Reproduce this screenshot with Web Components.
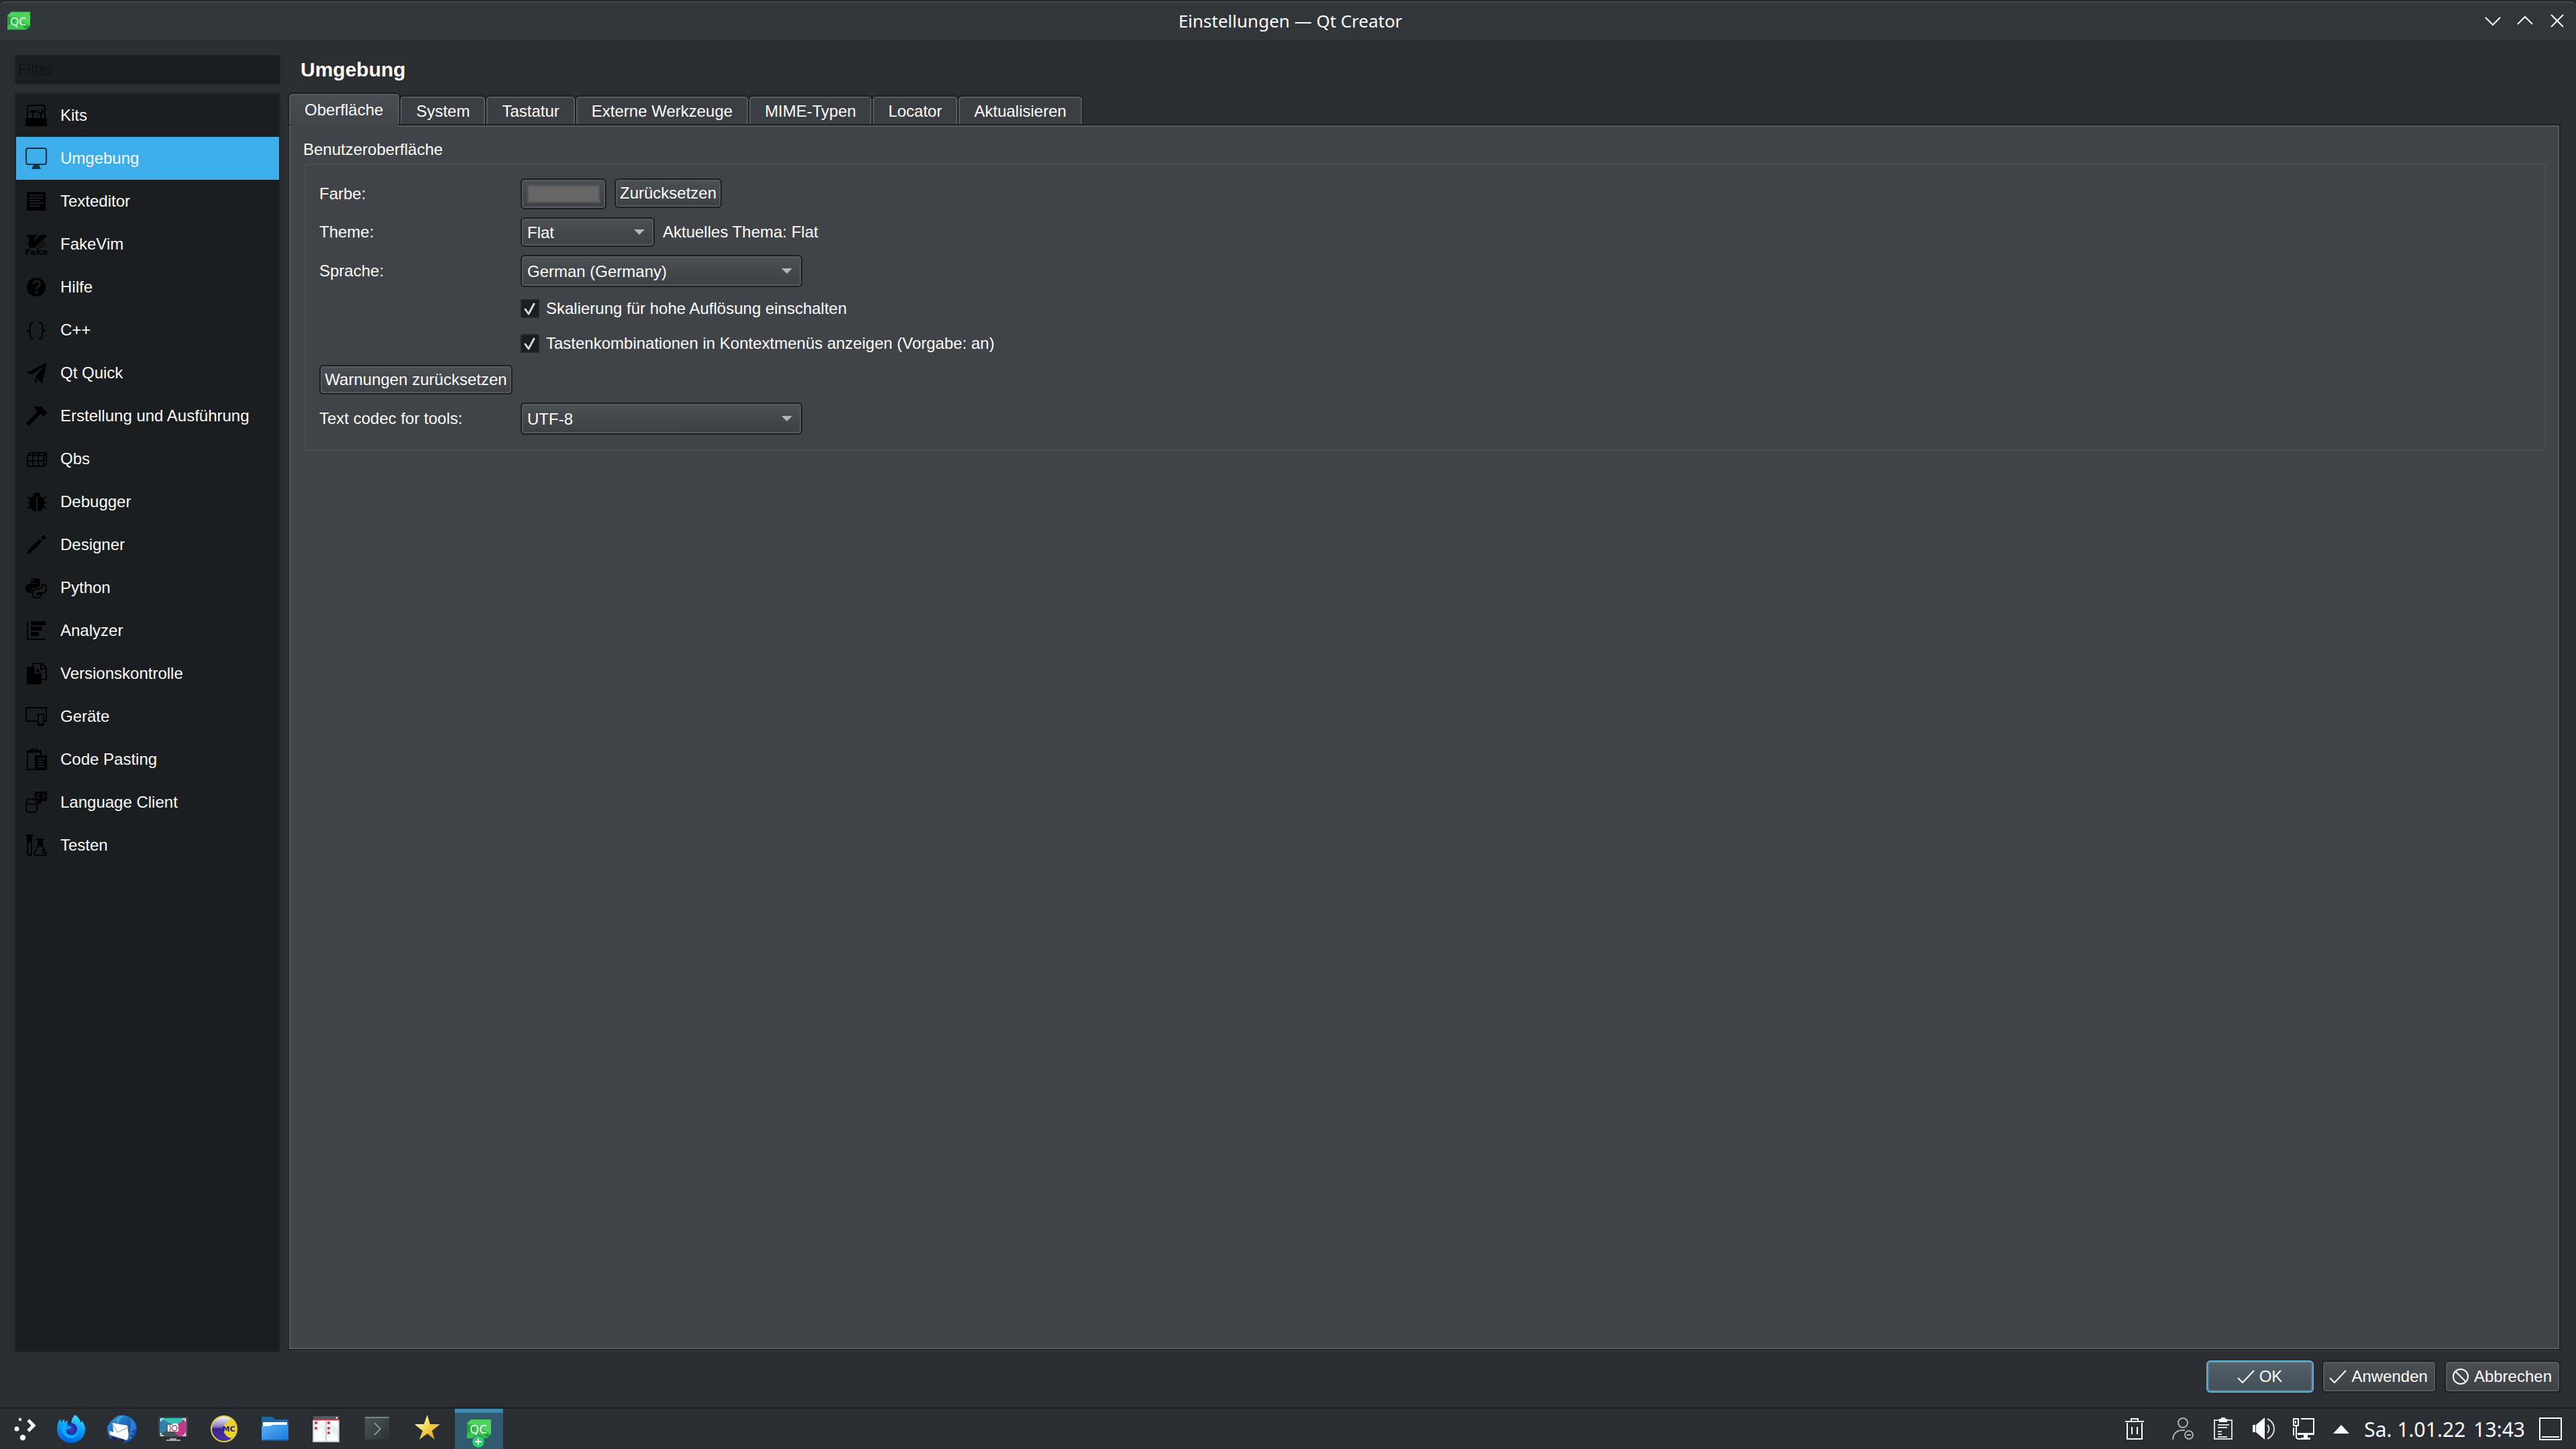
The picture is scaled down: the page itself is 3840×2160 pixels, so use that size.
<!DOCTYPE html>
<html lang="de">
<head>
<meta charset="utf-8">
<title>Einstellungen — Qt Creator</title>
<style>
  body {
    margin: 0;
    min-height: 100vh;
    display: flex;
    flex-direction: column;
    background: #2a2d31;
    color: #fcfcfc;
    font-family: "Liberation Sans", Arial, sans-serif;
    font-size: 24px;
    --dark: #1d2023;
    --light: #565a5f;
    --view: #1b1e20;
    --pane: #414448;
  }
  main {
    flex: 1;
    display: grid;
    grid-template-columns: 396px 1fr;
    grid-template-rows: 1fr auto;
    gap: 12px;
    padding: 22px 23px 24px 22px;
  }
  dialog-buttons {
    grid-column: 1 / -1;
  }
</style>
</head>
<body>
  <title-bar>Einstellungen — Qt Creator</title-bar>

  <main>
    <category-list>
      <category-item icon="kits">Kits</category-item>
      <category-item icon="screen" selected>Umgebung</category-item>
      <category-item icon="text">Texteditor</category-item>
      <category-item icon="vim">FakeVim</category-item>
      <category-item icon="help">Hilfe</category-item>
      <category-item icon="braces">C++</category-item>
      <category-item icon="plane">Qt Quick</category-item>
      <category-item icon="hammer">Erstellung und Ausführung</category-item>
      <category-item icon="qbs">Qbs</category-item>
      <category-item icon="bug">Debugger</category-item>
      <category-item icon="pencil">Designer</category-item>
      <category-item icon="python">Python</category-item>
      <category-item icon="bars">Analyzer</category-item>
      <category-item icon="versions">Versionskontrolle</category-item>
      <category-item icon="devices">Geräte</category-item>
      <category-item icon="paste">Code Pasting</category-item>
      <category-item icon="language">Language Client</category-item>
      <category-item icon="test">Testen</category-item>
    </category-list>

    <settings-page>
      <span slot="title">Umgebung</span>
      <page-tab selected>Oberfläche</page-tab>
      <page-tab>System</page-tab>
      <page-tab>Tastatur</page-tab>
      <page-tab>Externe Werkzeuge</page-tab>
      <page-tab>MIME-Typen</page-tab>
      <page-tab>Locator</page-tab>
      <page-tab>Aktualisieren</page-tab>
      <interface-form slot="content"></interface-form>
    </settings-page>

    <dialog-buttons>
      <push-button icon="check" default>OK</push-button>
      <push-button icon="check">Anwenden</push-button>
      <push-button icon="cancel">Abbrechen</push-button>
    </dialog-buttons>
  </main>

  <task-bar></task-bar>

<script>
// [viewBox size, markup]
const ICONS = {
  kits: [32, `<path d="M0 20h32v12H0z"/><path d="M3 20V5q0-4 4-4h18q4 0 4 4v15" fill="none" stroke="#000" stroke-width="2"/>
    <path d="M5 12l4-4h7v4h-4v8h-2v-8zM22 20v-6q-4-1-4-5 0-2 2-3v5h4V6q3 1 3 4 0 3-3 4v6z"/>`],
  screen: [32, `<g opacity=".7"><rect x="1" y="1" width="30" height="24" rx="3" fill="none" stroke="#000" stroke-width="2"/><path d="M12 26h8l3 6H9z"/></g>`],
  text: [32, `<path d="M2 2h28v28H2z"/><path d="M6 7h20M6 11h20M6 15h16M6 19h20M6 23h16" stroke="#1b1e20" stroke-width="2"/>`],
  vim: [32, `<path d="M16 0l16 16-8 6H8L0 15z" opacity=".3"/><path d="M2 2h13v3h-2v8l8-9V2h10v3L12 21H5V5H2z"/>
    <text x="-1" y="32" font-family="DejaVu Sans, sans-serif" font-size="13" font-weight="bold">Fake</text>`],
  help: [32, `<circle cx="16" cy="16" r="14"/><path d="M11.500 12q0-5 5-5t5 4.500q0 3-3 4.500-2 1-2 3.500" fill="none" stroke="#1b1e20" stroke-width="3"/><circle cx="16.500" cy="24" r="2" fill="#1b1e20"/>`],
  braces: [32, `<path d="M12 5h-1q-4 0-4 4v4q0 4-5 4 5 0 5 4v4q0 4 4 4h1M20 5h1q4 0 4 4v4q0 4 5 4-5 0-5 4v4q0 4-4 4h-1" fill="none" stroke="#000" stroke-width="2"/>`],
  plane: [32, `<path d="M32 0L1 16l9 2L25 8zM32 0L15 22l10 10zM14 23v9l4-4z"/>`],
  hammer: [32, `<path d="M12 2h12l8 9-5 6-4-4L5 31l-4-4L18 9z"/>`],
  qbs: [32, `<path d="M3 11h24v16H3zM3 19h24M11 11v16M19 11v16M3 11l4-4h24v16l-4 4M27 11l4-4M27 19l4-4" fill="none" stroke="#000" stroke-width="2"/><path d="M11 10l3-3M19 10l3-3" stroke="#000" stroke-width="3"/>`],
  bug: [32, `<path d="M11 7q2-5 6-5t6 5l-6 2zM16 9v21Q6 30 6 18q0-9 5-10zM18 9v21q10 0 10-12 0-9-5-10z"/>
    <path d="M7 12L3 8M6 17H2M7 23l-4 3M27 12l4-4M28 17h4M27 23l4 3" fill="none" stroke="#000" stroke-width="2"/>`],
  pencil: [32, `<path d="M2 30l2-6L21 7l4 4L8 28zM27 1l4 4-4 4-4-4z"/>`],
  python: [32, `<path d="M8 6q0-4 7-4t7 4v6q0 4-4 4h-5q-4 0-4 4v4H7q-7 0-7-7t7-7h8V9H8z"/><circle cx="11" cy="5" r="1" fill="#1b1e20"/>
    <path d="M25 11q6 0 6 7 0 6-6 6h-8v2h6v2q0 3-6 3t-6-3v-6q0-4 4-4h5q4 0 5-4z" fill="none" stroke="#000" stroke-width="2"/>`],
  bars: [32, `<path d="M2 2h2v26h26v2H2zM8 2h22v6H8zM8 10h16v6H8zM8 18h12v6H8z"/>`],
  versions: [32, `<path d="M2 6h12v10h10v16H2zM16 7l7 7h-7z"/><path d="M11 6V1h13l7 7v17h-7M23 1v8h8" fill="none" stroke="#000" stroke-width="2"/>`],
  devices: [32, `<path d="M18 23H1V3h30v20h-3" fill="none" stroke="#000" stroke-width="2"/><path d="M18 12h10v18H18zm2 2v12h6V14z" fill-rule="evenodd"/>`],
  paste: [32, `<path d="M2 2h6V0h10v2h6v8h-2V6H4v24h10v2H2zM14 10h18v22H14z"/><path d="M18 15h12M18 19h8M18 23h10M18 27h10M12 3h2" stroke="#1b1e20" stroke-width="2"/>`],
  language: [32, `<path d="M16 0h14q2 0 2 2v10q0 2-2 2h-5l-6 7v-7h-3q-2 0-2-2V2q0-2 2-2z"/><path d="M21 3l-4 4 4 4M25 3l4 4-4 4" fill="none" stroke="#1b1e20" stroke-width="2"/>
    <path d="M1 15q0-4 8-4t8 4-8 4-8-4v12q0 4 8 4t8-4V15" fill="none" stroke="#000" stroke-width="2"/>`],
  test: [32, `<path d="M0 0h12v2h-2v10H2V2H0zM16 6h12v2h-2v10h-8V8h-2z"/><path d="M3 12v16q0 3 3 3t3-3V12M19 17l-6 11q0 3 3 3h12q3 0 3-3l-6-11M24 23h4M24 27h6" fill="none" stroke="#000" stroke-width="2"/>`],

  check: [32, `<path d="M4 18l7 7L28 7" fill="none" stroke="#fcfcfc" stroke-width="2"/>`],
  cancel: [32, `<circle cx="16" cy="16" r="11" fill="none" stroke="#fcfcfc" stroke-width="2"/><path d="M8 8l16 16" stroke="#fcfcfc" stroke-width="2"/>`],
  min: [24, `<path d="M1 7l11 11L23 7" fill="none" stroke="#fcfcfc" stroke-width="2"/>`],
  max: [24, `<path d="M1 17L12 6l11 11" fill="none" stroke="#fcfcfc" stroke-width="2"/>`],
  close: [24, `<path d="M3 3l18 18M21 3L3 21" stroke="#fcfcfc" stroke-width="2"/>`],

  qtcreator: [36, `<defs><linearGradient id="g" x2="1" y2="1"><stop offset="0" stop-color="#2dc04a"/><stop offset="1" stop-color="#41cd52"/></linearGradient></defs>
    <path d="M6 4h30v22l-6 6H0V10z" fill="url(#g)"/><path d="M6 4h30v22L14 12 0 10z" fill="#5bdb6b" opacity=".6"/><path d="M0 10l12 8-12 8zM20 22l16 4-6 6z" fill="#17a02f" opacity=".8"/>
    <text x="17" y="25" text-anchor="middle" font-family="Liberation Sans Narrow, Noto Sans, sans-serif" font-size="18" fill="#fff">QC</text>`],
  launcher: [44, `<circle cx="14" cy="8" r="2.200" fill="#fcfcfc"/><circle cx="9" cy="22" r="3.500" fill="#fcfcfc"/><circle cx="18" cy="35" r="4.200" fill="#fcfcfc"/><path d="M26 9l8 8-8 8" fill="none" stroke="#fcfcfc" stroke-width="5"/>`],
  firefox: [44, `<defs><linearGradient id="a" x1=".7" x2=".4" y2="1"><stop offset="0" stop-color="#3fe1ff"/><stop offset=".5" stop-color="#0a9af5"/><stop offset="1" stop-color="#0560d8"/></linearGradient>
    <radialGradient id="b"><stop offset="0" stop-color="#4a37b8"/><stop offset="1" stop-color="#14309e"/></radialGradient></defs>
    <path d="M28 1q8 6 8 12l2-3q5 6 5 13a21 20 0 0 1-42 0Q1 13 6 7l1 5 5-5v5l5-3-1 5 6 1q0-9 6-14z" fill="url(#a)"/>
    <circle cx="22" cy="22" r="9" fill="url(#b)"/><path d="M7 18q7-4 13 0l3 1q-2 4-8 4-2 8 8 9 8 0 9-9 1 4 0 6-4 8-12 7Q9 34 7 18z" fill="#12b5ff" opacity=".8"/>`],
  thunderbird: [44, `<defs><linearGradient id="a" x2="1" y2="1"><stop offset="0" stop-color="#2fa7e0"/><stop offset=".5" stop-color="#1b62bf"/><stop offset="1" stop-color="#173a92"/></linearGradient></defs>
    <path d="M12 5Q19-1 30 3q13 5 14 18 0 14-14 21l-8 2q4-4 5-7L4 36Q-1 28 0 19l5-8z" fill="url(#a)"/>
    <path d="M34 6q9 7 9 16l-8 4 6 4-8 1 4 5-9 3q9-14 6-33z" fill="#3f93dc" opacity=".6"/>
    <path d="M8 13l10 2 12 2 1 9q2 6-2 13L4 31l-1-6 6 2z" fill="#fff"/><path d="M9 16l6 11 16-7" fill="none" stroke="#b7bac2" stroke-width="1.500"/><path d="M4 32l11 4-6 2z" fill="#2a1266"/><path d="M10 12q6-9 16-10-9 5-10 13z" fill="#36aadf"/><circle cx="13" cy="12" r="1.500" fill="#9b3a18"/>`],
  spectacle: [44, `<path d="M0 4h44v30H0z" fill="#3a4547"/><path d="M2 6h40v26H2z" fill="#36c1b2"/><path d="M2 6v24l22-13z" fill="#2f7fa8"/><path d="M42 5v28H28l-10-9z" fill="#bd3d89"/><path d="M2 30l16-9 12 12H2z" fill="#445456"/>
    <path d="M4 11V7h4M36 7h4v4M4 28v4h4M36 32h4v-4" fill="none" stroke="#fff" stroke-width="1.500"/><path d="M14 16h3v10h-3zM18 16h3l1-2h6l1 2h1v10H18z" fill="#fff"/><circle cx="24" cy="21" r="4" fill="#fff" stroke="#b0366e" stroke-width="1.500"/><path d="M17 36h10v2h6v2H12v-2h5z" fill="#a5a9ab"/>`],
  mc: [44, `<defs><linearGradient id="a" x2="0" y2="1"><stop offset="0" stop-color="#fff"/><stop offset=".4" stop-color="#8a7ec4"/><stop offset=".5" stop-color="#3a2393"/><stop offset="1" stop-color="#4b34a4"/></linearGradient></defs>
    <circle cx="22" cy="22" r="19" fill="url(#a)" stroke="#e3cf38" stroke-width="2"/><path d="M35 8a14 14 0 1 0 0 28q6-7 6-14t-6-14z" fill="#e9d230"/><text x="29" y="26" text-anchor="middle" font-family="DejaVu Sans, sans-serif" font-size="11" font-weight="bold" fill="#2f1d7d">MC</text>`],
  folder: [44, `<defs><linearGradient id="a" x2="1" y2="1"><stop offset="0" stop-color="#5cb0f5"/><stop offset="1" stop-color="#1677dc"/></linearGradient></defs>
    <path d="M2 4h16l4 4h20v12H2z" fill="#1d699f"/><path d="M4 12h36v10H4z" fill="#fff"/><path d="M2 18h12l4-2h24v24H2z" fill="url(#a)"/><path d="M2 38h40v2H2z" fill="#155b99"/>`],
  krusader: [44, `<path d="M3 3h38v38H3z" fill="#fff"/><path d="M3 3h38v5H3z" fill="#525b64"/><path d="M3 8h38v1.500H3z" fill="#d33a4a"/><path d="M3 9v32h38V9M22 10v31" fill="none" stroke="#c3c8cb" stroke-width="2"/>
    <path d="M10 14l11 6v6zM29 14l11 7v14l-11-9z" fill="#eceded"/><path d="M5 11h4v4H5zM5 19h4v4H5zM24 11h4v4h-4zM24 19h4v4h-4zM24 26h4v4h-4z" fill="#df4155"/><circle cx="38" cy="5.500" r="1.200" fill="#fff"/>`],
  konsole: [44, `<defs><linearGradient id="a" x2="1" y2="1"><stop offset="0" stop-color="#4a5658"/><stop offset="1" stop-color="#2c3235"/></linearGradient></defs><rect x="4" y="4" width="36" height="34" rx="1" fill="url(#a)"/><path d="M4 4h36v2H4z" fill="#7b8486"/><path d="M18 13l9 9-9 9" fill="none" stroke="#a8aeb0" stroke-width="1.500"/>`],
  star: [44, `<defs><linearGradient id="a" x2="1" y2="1"><stop offset=".2" stop-color="#fff6a4"/><stop offset=".5" stop-color="#f2d24a"/><stop offset="1" stop-color="#df9318"/></linearGradient></defs><path d="M21 1l4 14h15l-12 10 4 13-11-9-12 9 5-13L2 15h14z" fill="url(#a)"/>`],

  trash: [36, `<path d="M4 7h28M13 7V3h10v4M7 9v24h22V9M14 15v11M22 15v11" fill="none" stroke="#fcfcfc" stroke-width="2"/>`],
  user: [36, `<g fill="none" stroke="#aeb0b2" stroke-width="2"><circle cx="18" cy="9" r="7"/><path d="M3 34q1-14 15-14h3"/><circle cx="27" cy="27" r="6"/><path d="M24 27h6"/></g>`],
  clipboard: [36, `<path d="M5 5h26v28H5z" fill="none" stroke="#d9dadb" stroke-width="2"/><path d="M12 3h3V1h6v2h3v5H12z" fill="#fcfcfc"/><path d="M10 12h17M10 16h14M10 22h6M10 26h6M10 30h14" stroke="#d9dadb" stroke-width="2"/>`],
  volume: [36, `<path d="M2 12h4v11H2zM7 12L20 1v33L7 23z" fill="#fcfcfc"/><path d="M24 12q5 6 0 12M24 3q10 5 10 15t-10 15" fill="none" stroke="#d9dadb" stroke-width="2"/>`],
  network: [36, `<path d="M14 3h19v23H9" fill="none" stroke="#fcfcfc" stroke-width="2"/><path d="M9 24h24v3h-9v4h4v3H14v-3h4v-4H9z" fill="#fcfcfc"/><path d="M3 3h7v10H3zM3 16v12M7 13v16q0 4 4 4h4M6 6v4" fill="none" stroke="#fcfcfc" stroke-width="2"/>`],
  arrow: [28, `<path d="M2 21L14 8l12 13z" fill="#fcfcfc"/>`],
  desktop: [36, `<path d="M2 2h32v32H2z" fill="none" stroke="#fcfcfc" stroke-width="2"/><path d="M5 30h26" stroke="#fcfcfc" stroke-width="2"/>`]
};

class BreezeIcon extends HTMLElement {
  constructor() {
    super();
    this.attachShadow({ mode: 'open' });
  }

  connectedCallback() {
    const [box, markup] = ICONS[this.getAttribute('name')];
    const size = this.getAttribute('size') || box;
    this.shadowRoot.innerHTML = `
      <style>
        :host { display: block; flex: none; }
        svg { display: block; overflow: visible; }
      </style>
      <svg width="${size}" height="${size}" viewBox="0 0 ${box} ${box}" aria-hidden="true">${markup}</svg>
    `;
  }
}
customElements.define('breeze-icon', BreezeIcon);

class TitleBar extends HTMLElement {
  constructor() {
    super();
    this.attachShadow({ mode: 'open' });
    this.shadowRoot.innerHTML = `
      <style>
        :host { display: block; padding-top: 2px; background: #25282b; }
        header {
          box-sizing: border-box;
          height: 58px;
          display: grid;
          grid-template-columns: 1fr auto 1fr;
          align-items: center;
          padding: 0 4px 2px 11px;
          background: #31363b;
          border-top: 2px solid #42464e;
          border-radius: 8px 8px 0 0;
        }
        h1 { margin: 0; font: 26px "Noto Sans", sans-serif; line-height: 36px; }
        div { display: flex; justify-content: flex-end; }
        button {
          width: 48px;
          height: 48px;
          padding: 0;
          display: grid;
          place-items: center;
          border: 0;
          background: none;
        }
      </style>
      <header>
        <breeze-icon name="qtcreator" size="34"></breeze-icon>
        <h1><slot></slot></h1>
        <div>
          <button aria-label="Minimieren"><breeze-icon name="min"></breeze-icon></button>
          <button aria-label="Maximieren"><breeze-icon name="max"></breeze-icon></button>
          <button aria-label="Schließen"><breeze-icon name="close"></breeze-icon></button>
        </div>
      </header>
    `;
  }
}
customElements.define('title-bar', TitleBar);

class CategoryList extends HTMLElement {
  constructor() {
    super();
    this.attachShadow({ mode: 'open' });
    this.shadowRoot.innerHTML = `
      <style>
        :host { display: flex; flex-direction: column; gap: 12px; }
        input {
          box-sizing: border-box;
          width: 100%;
          height: 44px;
          padding: 0 2px;
          border: 2px solid #1e2124;
          border-radius: 5px;
          background: var(--view);
          color: inherit;
          font: inherit;
        }
        input::placeholder { color: #101314; opacity: 1; }
        nav {
          flex: 1;
          border: 2px solid #222529;
          background: var(--view);
        }
      </style>
      <input type="text" placeholder="Filter" aria-label="Filter">
      <nav><slot></slot></nav>
    `;
  }
}
customElements.define('category-list', CategoryList);

class CategoryItem extends HTMLElement {
  constructor() {
    super();
    this.attachShadow({ mode: 'open' });
  }

  connectedCallback() {
    this.shadowRoot.innerHTML = `
      <style>
        :host { display: block; }
        :host([selected]) { background: #3daee9; }
        a {
          height: 64px;
          display: flex;
          align-items: center;
          gap: 20px;
          padding-left: 14px;
          color: inherit;
          text-decoration: none;
        }
      </style>
      <a href="#"><breeze-icon name="${this.getAttribute('icon')}"></breeze-icon><span><slot></slot></span></a>
    `;
  }
}
customElements.define('category-item', CategoryItem);

class PageTab extends HTMLElement {
  constructor() {
    super();
    this.attachShadow({ mode: 'open' });
    this.shadowRoot.innerHTML = `
      <style>
        :host { display: block; position: relative; }
        button {
          box-sizing: border-box;
          height: 41px;
          padding: 0 21px;
          border: 2px solid var(--light);
          border-bottom: 0;
          border-radius: 5px 5px 0 0;
          box-shadow: 0 0 0 2px var(--dark);
          clip-path: inset(-2px -2px 0 -2px);
          background: #3b3e43;
          color: inherit;
          font: inherit;
        }
        :host([selected]) button {
          height: 45px;
          padding-right: 22px;
          background: linear-gradient(#494d52, var(--pane));
        }
        /* opens the selected tab into the pane below */
        :host([selected])::after {
          content: "";
          position: absolute;
          left: 2px;
          right: 2px;
          bottom: -4px;
          height: 4px;
          background: var(--pane);
        }
      </style>
      <button role="tab"><slot></slot></button>
    `;
  }
}
customElements.define('page-tab', PageTab);

class SettingsPage extends HTMLElement {
  constructor() {
    super();
    this.attachShadow({ mode: 'open' });
    this.shadowRoot.innerHTML = `
      <style>
        :host { display: flex; flex-direction: column; }
        h2 {
          margin: 0 0 12px;
          padding-left: 18px;
          font-size: 30px;
          line-height: 44px;
        }
        .tabs {
          height: 47px;
          display: flex;
          align-items: flex-end;
          gap: 2px;
          padding-left: 1px;
        }
        .pane {
          flex: 1;
          margin-bottom: 3px;
          border: 2px solid var(--dark);
          border-left-width: 1px;
          box-shadow: 0 1px 0 #3a3e42;
          background: var(--pane);
        }
        .inner {
          box-sizing: border-box;
          height: 100%;
          padding: 18px 18px 14px 19px;
          border: 2px solid var(--light);
        }
      </style>
      <h2><slot name="title"></slot></h2>
      <div class="tabs" role="tablist"><slot></slot></div>
      <div class="pane"><div class="inner"><slot name="content"></slot></div></div>
    `;
  }
}
customElements.define('settings-page', SettingsPage);

// shared look of buttons and drop-downs
const FRAME = `
  box-sizing: border-box;
  margin: 0;
  border: 2px solid var(--dark);
  border-radius: 6px;
  box-shadow: inset 0 0 0 2px var(--light);
  background: linear-gradient(#4b5055, #3d4045);
  color: inherit;
  font: inherit;
`;

class PushButton extends HTMLElement {
  constructor() {
    super();
    this.attachShadow({ mode: 'open' });
  }

  connectedCallback() {
    const icon = this.getAttribute('icon');
    this.shadowRoot.innerHTML = `
      <style>
        :host { display: block; }
        button {
          ${FRAME}
          display: flex;
          align-items: center;
          justify-content: center;
          gap: 4px;
          width: 100%;
          height: 44px;
          padding: 0 6px;
          white-space: nowrap;
        }
        :host([icon]) button { min-width: 160px; height: 48px; padding: 0 11px 0 6px; }
        :host([default]) button {
          border-color: #5cb3e6;
          box-shadow: inset 0 0 0 2px #67757d;
          background: linear-gradient(#52616a, #434f57);
        }
      </style>
      <button>${icon ? `<breeze-icon name="${icon}"></breeze-icon>` : ''}<slot></slot></button>
    `;
  }
}
customElements.define('push-button', PushButton);

class InterfaceForm extends HTMLElement {
  constructor() {
    super();
    this.attachShadow({ mode: 'open' });
    const arrow = '<svg width="16" height="8" aria-hidden="true"><path d="M0 0h16L8 8z" fill="#b4b6b8"/></svg>';
    const check = '<svg width="28" height="28" aria-hidden="true"><path d="M7 15l5 7 8-15" fill="none" stroke="#d8d9da" stroke-width="3" stroke-linecap="round" stroke-linejoin="round"/></svg>';
    this.shadowRoot.innerHTML = `
      <style>
        :host { display: block; }
        fieldset { margin: 0; padding: 0; border: 0; }
        legend { padding: 0; line-height: 32px; margin-bottom: 5px; }
        .group {
          display: grid;
          grid-template-columns: minmax(288px, max-content) 1fr;
          gap: 12px;
          align-items: center;
          margin-left: 2px;
          padding: 20px 20px 22px;
          border: 2px solid #494c51;
          border-radius: 4px;
          background: #404347;
        }
        .row { display: flex; align-items: center; gap: 12px; }
        .top { align-items: flex-start; }
        .check { grid-column: 2; height: 40px; gap: 10px; }
        .combo, .box { display: grid; align-items: center; }
        .combo > *, .box > * { grid-area: 1 / 1; }
        .combo svg { justify-self: end; margin-right: 15px; pointer-events: none; }
        .box svg { pointer-events: none; }
        select {
          ${FRAME}
          appearance: none;
          width: 420px;
          height: 48px;
          padding: 0 8px;
        }
        select.small { width: 200px; height: 44px; }
        input[type=color] {
          ${FRAME}
          width: 128px;
          height: 46px;
          padding: 7px;
        }
        input[type=color]::-webkit-color-swatch-wrapper { padding: 0; }
        input[type=color]::-webkit-color-swatch {
          border: 3px solid #5a5a5a;
          border-radius: 0;
          outline: 1px solid #4a4b4d;
          outline-offset: -1px;
        }
        input[type=checkbox] {
          appearance: none;
          box-sizing: border-box;
          width: 28px;
          height: 28px;
          margin: 0;
          border: 2px solid #24272a;
          border-radius: 2px;
          background: var(--view);
        }
      </style>
      <fieldset>
        <legend>Benutzeroberfläche</legend>
        <div class="group">
          <label for="color">Farbe:</label>
          <div class="row top">
            <input type="color" id="color" value="#666666">
            <push-button>Zurücksetzen</push-button>
          </div>

          <label for="theme">Theme:</label>
          <div class="row">
            <div class="combo"><select id="theme" class="small"><option>Flat</option></select>${arrow}</div>
            <span>Aktuelles Thema: Flat</span>
          </div>

          <label for="language">Sprache:</label>
          <div class="row">
            <div class="combo"><select id="language"><option>German (Germany)</option></select>${arrow}</div>
          </div>

          <div class="row check">
            <div class="box"><input type="checkbox" id="dpi" checked>${check}</div>
            <label for="dpi">Skalierung für hohe Auflösung einschalten</label>
          </div>
          <div class="row check">
            <div class="box"><input type="checkbox" id="keys" checked>${check}</div>
            <label for="keys">Tastenkombinationen in Kontextmenüs anzeigen (Vorgabe: an)</label>
          </div>

          <push-button>Warnungen zurücksetzen</push-button>
          <span></span>

          <label for="codec">Text codec for tools:</label>
          <div class="row">
            <div class="combo"><select id="codec"><option>UTF-8</option></select>${arrow}</div>
          </div>
        </div>
      </fieldset>
    `;
  }
}
customElements.define('interface-form', InterfaceForm);

class DialogButtons extends HTMLElement {
  constructor() {
    super();
    this.attachShadow({ mode: 'open' });
    this.shadowRoot.innerHTML = `
      <style>
        :host { display: flex; justify-content: flex-end; gap: 12px; }
      </style>
      <slot></slot>
    `;
  }
}
customElements.define('dialog-buttons', DialogButtons);

class TaskBar extends HTMLElement {
  constructor() {
    super();
    this.attachShadow({ mode: 'open' });
    const apps = ['firefox', 'thunderbird', 'spectacle', 'mc', 'folder', 'krusader', 'konsole', 'star'];
    this.shadowRoot.innerHTML = `
      <style>
        :host {
          height: 60px;
          display: flex;
          align-items: center;
          justify-content: space-between;
          padding-right: 20px;
          background: #2a2d32;
          box-shadow: 0 -2px 2px #1a1c1f;
        }
        .apps { display: flex; gap: 4px; padding-left: 10px; }
        .tray { display: flex; align-items: center; gap: 24px; }
        button {
          height: 60px;
          padding: 0;
          display: grid;
          place-items: center;
          border: 0;
          background: none;
        }
        .apps button { width: 72px; }
        .apps button:first-child { width: 56px; }
        .apps .active {
          box-sizing: border-box;
          position: relative;
          padding-bottom: 6px;
          border-top: 6px solid #3b8bb5;
          background: #31596f;
        }
        .badge { position: absolute; left: 25px; top: 33px; }
        .trash { margin-right: 12px; }
        time { display: flex; gap: 12px; margin: 0 -4px; font: 30px "Noto Sans", sans-serif; }
      </style>
      <div class="apps">
        <button aria-label="launcher"><breeze-icon name="launcher"></breeze-icon></button>
        ${apps.map(app => `<button aria-label="${app}"><breeze-icon name="${app}"></breeze-icon></button>`).join('')}
        <button class="active" aria-label="qtcreator">
          <breeze-icon name="qtcreator"></breeze-icon>
          <svg class="badge" width="20" height="20" aria-hidden="true"><circle cx="10" cy="10" r="9.500" fill="#2ecc71" stroke="#1e4f4b"/><path d="M10 5v10M5 10h10" stroke="#fff" stroke-width="2"/></svg>
        </button>
      </div>
      <div class="tray">
        <button class="trash" aria-label="trash"><breeze-icon name="trash"></breeze-icon></button>
        <button aria-label="user"><breeze-icon name="user"></breeze-icon></button>
        <button aria-label="clipboard"><breeze-icon name="clipboard"></breeze-icon></button>
        <button aria-label="volume"><breeze-icon name="volume"></breeze-icon></button>
        <button aria-label="network"><breeze-icon name="network"></breeze-icon></button>
        <button aria-label="more"><breeze-icon name="arrow"></breeze-icon></button>
        <time datetime="2022-01-01T13:43"><span>Sa. 1.01.22</span><span>13:43</span></time>
        <button aria-label="desktop"><breeze-icon name="desktop"></breeze-icon></button>
      </div>
    `;
  }
}
customElements.define('task-bar', TaskBar);
</script>
</body>
</html>
